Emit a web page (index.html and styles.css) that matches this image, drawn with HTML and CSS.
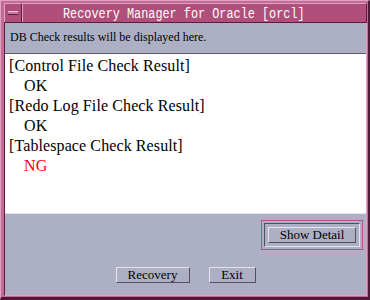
FILE: index.html
```html
<!DOCTYPE html>
<html>
<head>
<meta charset="utf-8">
<link rel="stylesheet" href="styles.css">
</head>
<body>
<div class="win">
  <div class="titlebar">
    <div class="menu-btn"><span class="menu-bar"></span></div>
    <div class="title"><span class="title-text">Recovery Manager for Oracle [orcl]</span></div>
  </div>
  <div class="client">
    <div class="info">DB Check results will be displayed here.</div>
    <div class="results">
      <div class="line">[Control File Check Result]</div>
      <div class="line ind">OK</div>
      <div class="line">[Redo Log File Check Result]</div>
      <div class="line ind">OK</div>
      <div class="line">[Tablespace Check Result]</div>
      <div class="line ind ng">NG</div>
    </div>
    <div class="detail-row">
      <div class="focus">
        <div class="default-frame">
          <button class="btn detail">Show Detail</button>
        </div>
      </div>
    </div>
    <div class="actions">
      <button class="btn recovery">Recovery</button>
      <button class="btn exit">Exit</button>
    </div>
  </div>
</div>
</body>
</html>
```
FILE: styles.css
```css
html, body {
  margin: 0;
  padding: 0;
  width: 370px;
  height: 300px;
  overflow: hidden;
}
.win {
  box-sizing: border-box;
  width: 370px;
  height: 300px;
  background: #c46c96;
  border-top: 1px solid #e2a2c2;
  border-left: 1px solid #e2a2c2;
  border-right: 2px solid #4e1a36;
  border-bottom: 3px solid #4e1a36;
  padding: 2px 1px 1px 3px;
  display: flex;
  flex-direction: column;
}
.titlebar {
  display: flex;
  height: 20px;
  box-sizing: border-box;
  border-bottom: 1px solid #5a1c3c;
}
.menu-btn {
  box-sizing: border-box;
  width: 18px;
  height: 19px;
  background: #b04f7a;
  border-top: 1px solid #e2a2c2;
  border-left: 1px solid #e2a2c2;
  border-right: 1px solid #5a1c3c;
  display: flex;
  align-items: center;
  justify-content: center;
}
.menu-bar {
  display: block;
  width: 10px;
  height: 2px;
  background: #c97aa0;
  border-top: 1px solid #f0c0d8;
  border-bottom: 1px solid #5a1c3c;
}
.title {
  flex: 1;
  box-sizing: border-box;
  height: 19px;
  background: #b04f7a;
  border-top: 1px solid #e2a2c2;
  border-left: 1px solid #e2a2c2;
  border-right: 1px solid #5a1c3c;
  color: #ffffff;
  padding-left: 40px;
  white-space: nowrap;
  overflow: hidden;
}
.title-text {
  display: inline-block;
  font-family: "Liberation Mono", monospace;
  font-size: 14px;
  line-height: 18px;
  transform: scaleX(0.846);
  transform-origin: left center;
}
.client {
  flex: 1;
  background: #adb0c4;
  border-right: 1px solid #e2a2c2;
  border-bottom: 1px solid #e2a2c2;
  border-left: 1px solid #5a1c3c;
  display: flex;
  flex-direction: column;
}
.info {
  height: 30px;
  box-sizing: border-box;
  padding: 7px 0 0 5px;
  font-family: "Liberation Serif", serif;
  font-size: 12px;
  color: #000;
}
.results {
  height: 161px;
  box-sizing: border-box;
  background: #ffffff;
  border-top: 1px solid #5c5c6c;
  border-bottom: 1px solid #e4e4ee;
  padding: 2px 0 0 4px;
  font-family: "Liberation Serif", serif;
  font-size: 16px;
  letter-spacing: 0.1px;
  line-height: 20px;
  color: #000;
}
.ind {
  padding-left: 15px;
}
.ng {
  color: #ff0000;
}
.detail-row {
  display: flex;
  justify-content: flex-end;
  padding: 6px 3px 0 0;
}
.focus {
  border: 1px solid #c0508a;
  padding: 2px;
}
.default-frame {
  border-top: 1px solid #50505e;
  border-left: 1px solid #50505e;
  border-right: 1px solid #e4e4ee;
  border-bottom: 1px solid #e4e4ee;
  padding: 3px;
}
.btn {
  box-sizing: border-box;
  margin: 0;
  padding: 0;
  height: 16px;
  background: #adb0c4;
  border-top: 1px solid #e4e4ee;
  border-left: 1px solid #e4e4ee;
  border-right: 1px solid #50505e;
  border-bottom: 1px solid #50505e;
  border-radius: 0;
  font-family: "Liberation Serif", serif;
  font-size: 13px;
  line-height: 14px;
  color: #000;
  display: block;
}
.detail {
  width: 88px;
}
.actions {
  display: flex;
  justify-content: center;
  gap: 19px;
  padding-top: 17px;
}
.recovery {
  width: 74px;
}
.exit {
  width: 47px;
}
```
